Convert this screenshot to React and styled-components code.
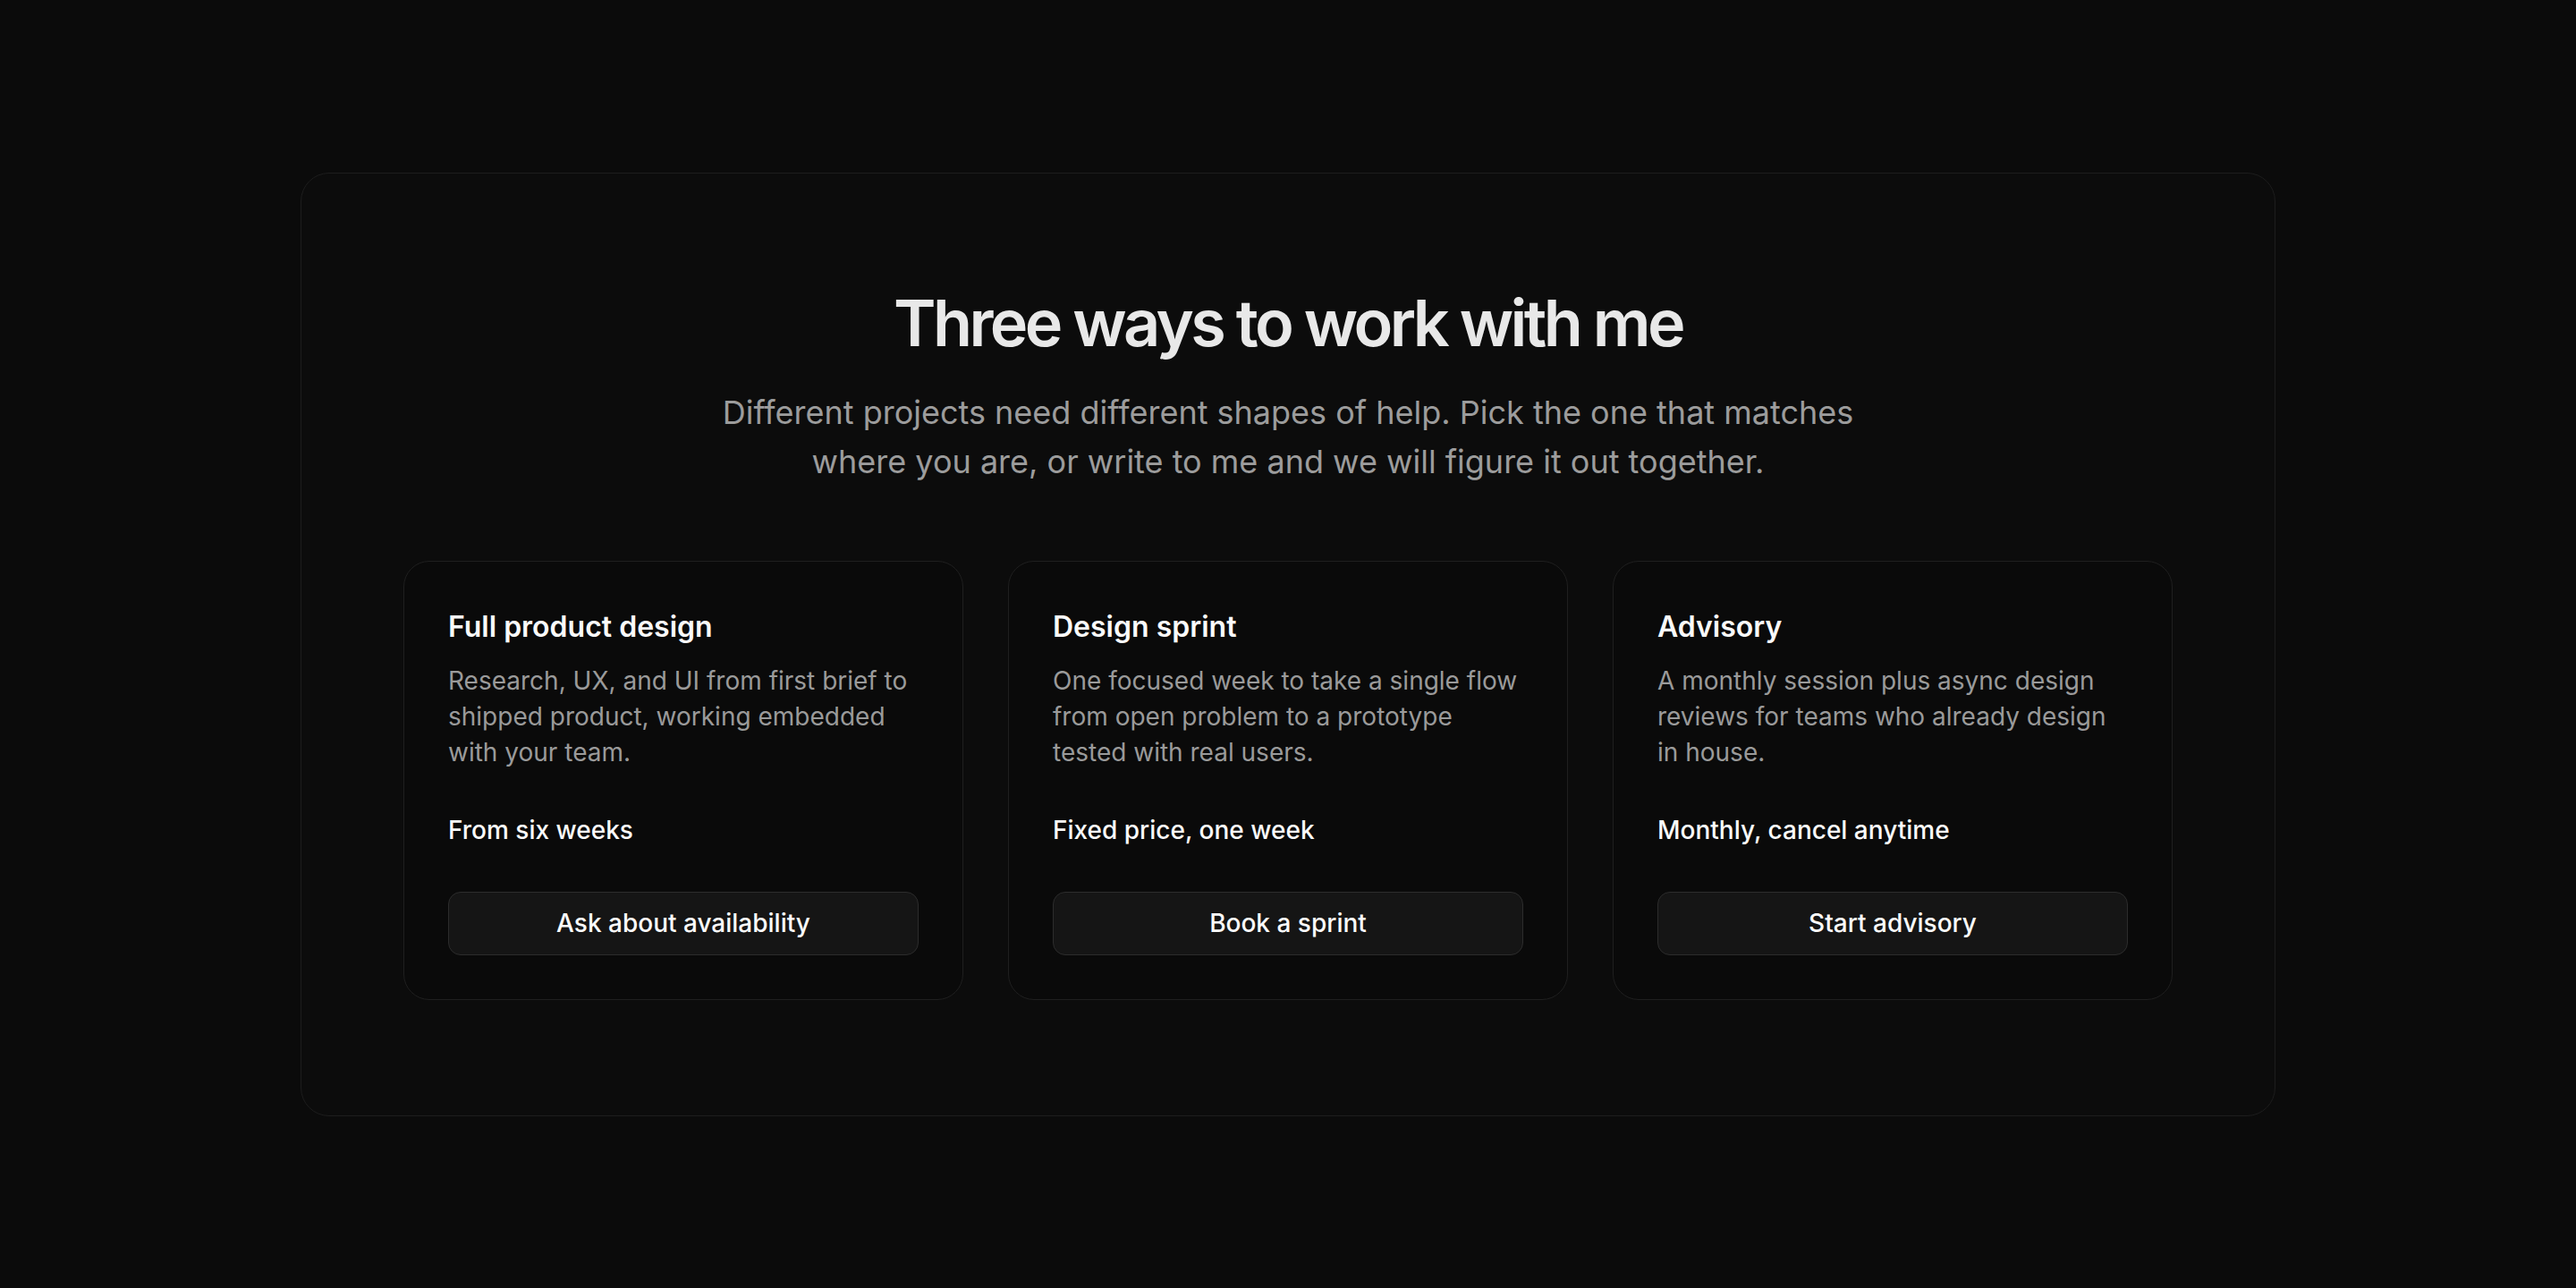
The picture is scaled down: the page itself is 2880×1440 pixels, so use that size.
import styled, { createGlobalStyle } from 'styled-components';

const plans = [
  {
    title: 'Full product design',
    body: 'Research, UX, and UI from first brief to shipped product, working embedded with your team.',
    term: 'From six weeks',
    cta: 'Ask about availability',
  },
  {
    title: 'Design sprint',
    body: 'One focused week to take a single flow from open problem to a prototype tested with real users.',
    term: 'Fixed price, one week',
    cta: 'Book a sprint',
  },
  {
    title: 'Advisory',
    body: 'A monthly session plus async design reviews for teams who already design in house.',
    term: 'Monthly, cancel anytime',
    cta: 'Start advisory',
  },
];

const GlobalStyle = createGlobalStyle`
  * {
    box-sizing: border-box;
  }

  html,
  body {
    margin: 0;
    padding: 0;
    background: #0b0b0b;
  }

  body {
    font-family: 'Inter', 'Noto Sans', sans-serif;
    -webkit-font-smoothing: antialiased;
  }
`;

const PlanCard = ({ title, body, term, cta }) => (
  <Card>
    <CardTitle>{title}</CardTitle>
    <CardBody>{body}</CardBody>
    <Term>{term}</Term>
    <Button type="button">{cta}</Button>
  </Card>
);

const App = () => (
  <>
    <GlobalStyle />
    <Page>
      <Panel>
        <Header>
          <Title>Three ways to work with me</Title>
          <Lead>
            Different projects need different shapes of help. Pick the one that matches where you
            are, or write to me and we will figure it out together.
          </Lead>
        </Header>
        <CardGrid>
          {plans.map(plan => (
            <PlanCard key={plan.title} {...plan} />
          ))}
        </CardGrid>
      </Panel>
    </Page>
  </>
);

export default App;

const Page = styled.main`
  min-height: 100vh;
  display: flex;
  align-items: center;
  justify-content: center;
  background: #0b0b0b;
`;

const Panel = styled.section`
  width: 2208px;
  padding: 128px 114px 129px;
  border: 1px solid #1d1d1d;
  border-radius: 32px;
  background: #0c0c0c;
`;

const Header = styled.header`
  display: flex;
  flex-direction: column;
  align-items: center;
  text-align: center;
`;

const Title = styled.h2`
  margin: 0;
  font-size: 72px;
  font-weight: 600;
  line-height: 78px;
  letter-spacing: -0.05em;
  color: #e8e8e8;
`;

const Lead = styled.p`
  margin: 34px 0 0;
  max-width: 1320px;
  font-size: 36px;
  font-weight: 400;
  line-height: 55px;
  color: #9c9c9c;
`;

const CardGrid = styled.div`
  display: grid;
  grid-template-columns: repeat(3, 1fr);
  gap: 50px;
  margin-top: 83px;
`;

const Card = styled.article`
  display: flex;
  flex-direction: column;
  padding: 49px;
  border: 1px solid #1f1f1f;
  border-radius: 29px;
  background: #0a0a0a;
`;

const CardTitle = styled.h3`
  margin: 0;
  font-size: 32px;
  font-weight: 600;
  line-height: 48px;
  color: #fafafa;
`;

const CardBody = styled.p`
  margin: 16px 0 0;
  font-size: 28px;
  line-height: 40px;
  color: #9a9a9a;
`;

const Term = styled.div`
  margin-top: 46px;
  font-size: 28px;
  font-weight: 500;
  line-height: 43px;
  color: #fafafa;
`;

const Button = styled.button`
  height: 71px;
  margin-top: 47px;
  padding: 0 24px;
  border: 1px solid #2c2c2c;
  border-radius: 14px;
  background: #151515;
  font-family: inherit;
  font-size: 28px;
  font-weight: 500;
  color: #fafafa;
  cursor: pointer;
`;
